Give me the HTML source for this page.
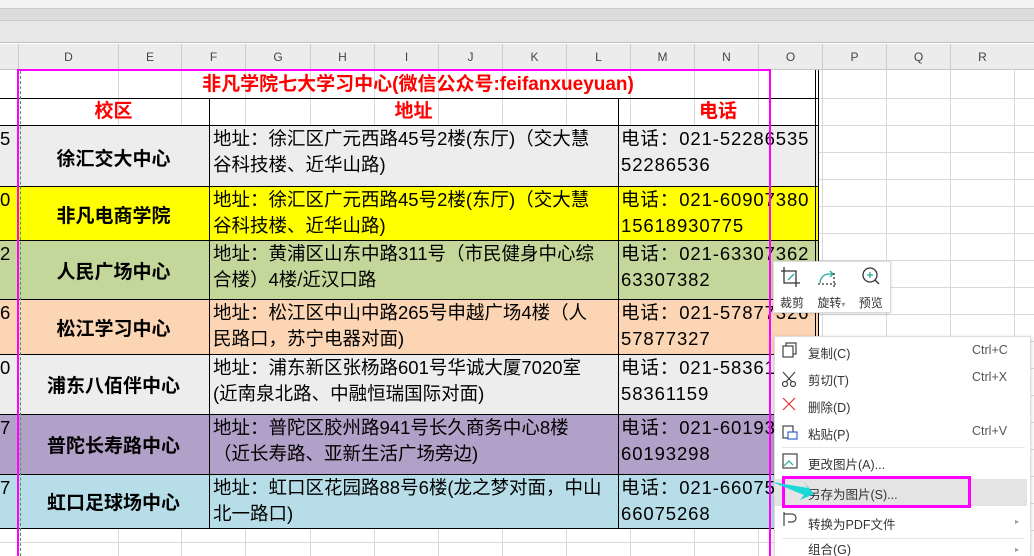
<!DOCTYPE html>
<html><head><meta charset="utf-8"><style>
*{margin:0;padding:0;box-sizing:border-box}
html,body{width:1034px;height:556px;overflow:hidden}
body{background:#fff;position:relative;font-family:"Liberation Sans","Noto Sans CJK SC",sans-serif}
.a{position:absolute}
.t{position:absolute;font-size:18.5px;line-height:26px;color:#000;white-space:nowrap}
.p{letter-spacing:0.9px}
.n{position:absolute;font-size:19px;font-weight:bold;text-align:center;width:191px;left:18px}
.mi{position:absolute;left:808px;font-size:12.5px;color:#333}
.sc{position:absolute;left:972px;font-size:12.5px;color:#555}
.hd{position:absolute;text-align:center;font-size:19px;font-weight:bold;color:#f00;line-height:27px}
</style></head><body>
<div class="a" style="left:0;top:0;width:1034px;height:8px;background:#f3f3f3"></div>
<div class="a" style="left:0;top:8px;width:1034px;height:12px;background:#dcdcdc;border-top:1px solid #ccc"></div>
<div class="a" style="left:0;top:20px;width:1034px;height:23px;background:#e8e8e8;border-top:1px solid #c8c8c8;border-bottom:1px solid #bdbdbd"></div>
<div class="a" style="left:0;top:44px;width:1034px;height:26px;background:#ececec;border-bottom:1px solid #c8c8c8"></div>
<div id="hdr"></div>
<div id="grid"></div>
<div class="a" style="left:0;top:125px;width:818px;height:61px;background:#ededed"></div>
<div class="a" style="left:0;top:186px;width:818px;height:54px;background:#ffff00"></div>
<div class="a" style="left:0;top:240px;width:818px;height:59px;background:#c4d79b"></div>
<div class="a" style="left:0;top:299px;width:818px;height:55px;background:#fcd5b4"></div>
<div class="a" style="left:0;top:354px;width:818px;height:60px;background:#ededed"></div>
<div class="a" style="left:0;top:414px;width:818px;height:60px;background:#b1a0c7"></div>
<div class="a" style="left:0;top:474px;width:818px;height:54px;background:#b7dee8"></div>
<div class="a" style="left:0;top:98px;width:818px;height:1px;background:#000"></div>
<div class="a" style="left:0;top:125px;width:818px;height:1px;background:#000"></div>
<div class="a" style="left:0;top:186px;width:818px;height:1px;background:#000"></div>
<div class="a" style="left:0;top:240px;width:818px;height:1px;background:#000"></div>
<div class="a" style="left:0;top:299px;width:818px;height:1px;background:#000"></div>
<div class="a" style="left:0;top:354px;width:818px;height:1px;background:#000"></div>
<div class="a" style="left:0;top:414px;width:818px;height:1px;background:#000"></div>
<div class="a" style="left:0;top:474px;width:818px;height:1px;background:#000"></div>
<div class="a" style="left:0;top:528px;width:818px;height:1px;background:#000"></div>
<div class="a" style="left:209px;top:98px;width:1px;height:431px;background:#000"></div>
<div class="a" style="left:618px;top:98px;width:1px;height:431px;background:#000"></div>
<div class="a" style="left:815px;top:70px;width:1px;height:459px;background:#000"></div>
<div class="a" style="left:818px;top:70px;width:1px;height:459px;background:#000"></div>
<div class="hd" style="left:18px;top:71px;width:800px;line-height:28px">非凡学院七大学习中心(微信公众号:feifanxueyuan)</div>
<div class="hd" style="left:18px;top:98px;width:191px">校区</div>
<div class="hd" style="left:209px;top:98px;width:409px">地址</div>
<div class="hd" style="left:618px;top:98px;width:200px">电话</div>
<div class="t" style="left:0;top:126px">5</div>
<div class="t" style="left:0;top:187px">0</div>
<div class="t" style="left:0;top:241px">2</div>
<div class="t" style="left:0;top:300px">6</div>
<div class="t" style="left:0;top:355px">0</div>
<div class="t" style="left:0;top:415px">7</div>
<div class="t" style="left:0;top:475px">7</div>
<div class="n" style="top:144px">徐汇交大中心</div>
<div class="n" style="top:201px">非凡电商学院</div>
<div class="n" style="top:257px">人民广场中心</div>
<div class="n" style="top:314px">松江学习中心</div>
<div class="n" style="top:371px">浦东八佰伴中心</div>
<div class="n" style="top:431px">普陀长寿路中心</div>
<div class="n" style="top:488px">虹口足球场中心</div>
<div class="t" style="left:213px;top:126px">地址：徐汇区广元西路45号2楼(东厅)（交大慧<br>谷科技楼、近华山路)</div>
<div class="t" style="left:213px;top:187px">地址：徐汇区广元西路45号2楼(东厅)（交大慧<br>谷科技楼、近华山路)</div>
<div class="t" style="left:213px;top:241px">地址：黄浦区山东中路311号（市民健身中心综<br>合楼）4楼/近汉口路</div>
<div class="t" style="left:213px;top:300px">地址：松江区中山中路265号申越广场4楼（人<br>民路口，苏宁电器对面)</div>
<div class="t" style="left:213px;top:355px">地址：浦东新区张杨路601号华诚大厦7020室<br>(近南泉北路、中融恒瑞国际对面)</div>
<div class="t" style="left:213px;top:415px">地址：普陀区胶州路941号长久商务中心8楼<br>（近长寿路、亚新生活广场旁边)</div>
<div class="t" style="left:213px;top:475px">地址：虹口区花园路88号6楼(龙之梦对面，中山<br>北一路口)</div>
<div class="a" style="left:619px;top:126px;width:196px;height:400px;overflow:hidden">
<div class="t p" style="left:2px;top:0">电话：021-52286535<br>52286536</div>
<div class="t p" style="left:2px;top:61px">电话：021-60907380<br>15618930775</div>
<div class="t p" style="left:2px;top:115px">电话：021-63307362<br>63307382</div>
<div class="t p" style="left:2px;top:174px">电话：021-57877326<br>57877327</div>
<div class="t p" style="left:2px;top:229px">电话：021-58361158<br>58361159</div>
<div class="t p" style="left:2px;top:289px">电话：021-60193297<br>60193298</div>
<div class="t p" style="left:2px;top:349px">电话：021-66075267<br>66075268</div>
</div>
<div class="a" style="left:17px;top:69px;width:754px;height:487px;border:2px solid #f0f;border-bottom:none"></div>
<div class="a" style="left:20px;top:71px;width:1px;height:485px;border-left:1px dashed #3a3"></div>
<div class="a" style="left:773px;top:261px;width:118px;height:52px;background:#fff;border:1px solid #ddd;box-shadow:0 1px 3px rgba(0,0,0,.15)"></div>
<svg class="a" style="left:780px;top:265px" width="100" height="24" viewBox="0 0 100 24" fill="none" stroke="#333" stroke-width="1.3">
<path d="M4 2v16h16M1 6h15v16"/><path d="M8 15l6-6" stroke="#2a9"/>
<path d="M40 18a9 9 0 0 1 9-9h4" stroke="#2a9"/><path d="M50 6l3 3-3 3" stroke="#2a9"/><path d="M38 19h18M54 8v14" stroke-dasharray="2 2"/>
<circle cx="90" cy="10" r="7"/><path d="M95 15l4 4"/><path d="M87 10h6M90 7v6" stroke="#2a9"/>
</svg>
<div class="a" style="left:780px;top:294px;font-size:12px;color:#333;white-space:nowrap">裁剪&nbsp;&nbsp;&nbsp;&nbsp;旋转<span style="font-size:8px;color:#999">▾</span>&nbsp;&nbsp;&nbsp;&nbsp;预览</div>
<div class="a" style="left:774px;top:336px;width:257px;height:220px;background:#fff;border:1px solid #ddd;border-bottom:none;box-shadow:0 1px 4px rgba(0,0,0,.2)"></div>
<div class="a" style="left:775px;top:479px;width:252px;height:27px;background:#e4e4e4"></div>
<div class="mi" style="top:343px">复制(C)</div><div class="sc" style="top:343px">Ctrl+C</div>
<div class="mi" style="top:370px">剪切(T)</div><div class="sc" style="top:370px">Ctrl+X</div>
<div class="mi" style="top:397px">删除(D)</div>
<div class="mi" style="top:424px">粘贴(P)</div><div class="sc" style="top:424px">Ctrl+V</div>
<div class="a" style="left:782px;top:447px;width:243px;height:1px;background:#e6e6e6"></div>
<div class="mi" style="top:454px">更改图片(A)...</div>
<div class="mi" style="top:484px">另存为图片(S)...</div>
<div class="mi" style="top:514px">转换为PDF文件</div>
<div class="a" style="left:1015px;top:517px;font-size:8px;color:#999">▸</div>
<div class="a" style="left:782px;top:538px;width:243px;height:1px;background:#e6e6e6"></div>
<div class="a" style="left:808px;top:543px;width:60px;height:13px;overflow:hidden;font-size:12.5px;color:#333;line-height:15px">组合(G)</div>
<div class="a" style="left:1015px;top:545px;font-size:8px;color:#999;line-height:10px">▸</div>
<svg class="a" style="left:780px;top:340px" width="20" height="216" viewBox="0 0 20 216" fill="none" stroke="#444" stroke-width="1.2">
<rect x="6" y="3" width="10" height="11"/><rect x="3" y="6" width="10" height="11" fill="#fff"/>
<circle cx="5" cy="44" r="2.5"/><circle cx="13" cy="44" r="2.5"/><path d="M6 42l9-10M12 42L3 32"/>
<path d="M3 58l12 12M15 58L3 70" stroke="#d33"/>
<rect x="3" y="86" width="10" height="12"/><rect x="8" y="92" width="9" height="7" stroke="#36c" fill="#fff"/>
<rect x="3" y="114" width="14" height="14"/><path d="M4 126l5-5 4 4" stroke="#2a9"/>
<path d="M4 172v14M4 174h8a4 4 0 0 1 0 8H8"/>
</svg>
<div class="a" style="left:782px;top:476px;width:189px;height:32px;border:3px solid #f0f"></div>
<svg class="a" style="left:770px;top:478px" width="50" height="24"><path d="M2 4l36 6-4-6 10 12-14 6 4-5z" fill="#1dd6d6"/></svg>
<script>
var h=document.getElementById('hdr'),g=document.getElementById('grid'),s='',gs='';
var cols=[['D',18,118],['E',118,181],['F',181,245],['G',245,310],['H',310,374],['I',374,438],['J',438,502],['K',502,566],['L',566,630],['M',630,694],['N',694,758],['O',758,822],['P',822,886],['Q',886,950],['R',950,1014]];
cols.forEach(function(c){s+='<div class="a" style="left:'+c[1]+'px;top:44px;width:'+(c[2]-c[1])+'px;height:26px;border-left:1px solid #ccc;text-align:center;font-size:12px;line-height:26px;color:#444">'+c[0]+'</div>';
gs+='<div class="a" style="left:'+c[2]+'px;top:70px;width:1px;height:486px;background:#d9d9d9"></div>';});
for(var y=98;y<556;y+=27){gs+='<div class="a" style="left:818px;top:'+y+'px;width:216px;height:1px;background:#d9d9d9"></div>';}
gs+='<div class="a" style="left:0;top:542px;width:818px;height:1px;background:#d9d9d9"></div>';
h.innerHTML=s;g.innerHTML=gs;
</script>
</body></html>
